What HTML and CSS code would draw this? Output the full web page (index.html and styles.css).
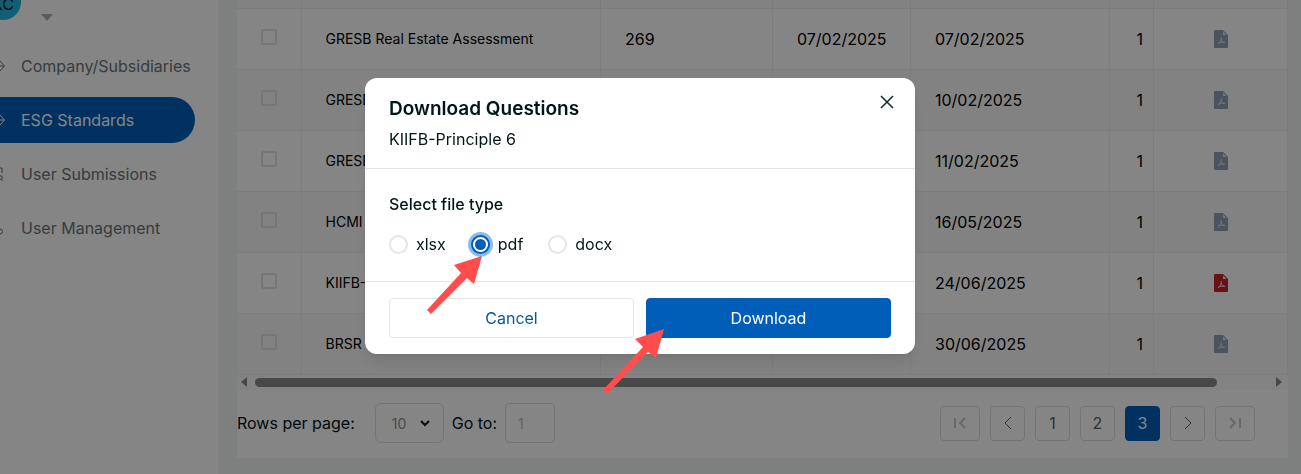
FILE: index.html
```html
<!DOCTYPE html>
<html lang="en">
<head>
<meta charset="utf-8">
<title>ESG Standards</title>
<link rel="stylesheet" href="styles.css">
</head>
<body>
<svg class="defs" aria-hidden="true">
  <symbol id="pdf" viewBox="0 0 14 18">
    <path fill="currentColor" d="M1 0h8l5 5v12a1 1 0 0 1-1 1H1a1 1 0 0 1-1-1V1a1 1 0 0 1 1-1z"/>
    <path class="fold" d="M9 1.500v3.500h3.500z"/>
    <path class="mark" d="M7 7c.6 2 .5 3-3 7M7 9c.7 2 2 3.200 4 3.500M4 13.500c2-1.400 4-1.600 7-1"/>
  </symbol>
</svg>
<div class="app">
  <aside class="sidebar">
    <div class="profile">
      <span class="avatar">KC</span>
      <span class="caret"></span>
    </div>
    <nav class="nav">
      <a href="#"><svg class="nav-icon" viewBox="0 0 21 20"><path d="M0 5l4.500 5L0 15M0 10h4"/></svg>Company/Subsidiaries</a>
      <a href="#" class="active"><svg class="nav-icon" viewBox="0 0 21 20"><path d="M0 5l4.500 5L0 15M0 10h4"/></svg>ESG Standards</a>
      <a href="#"><svg class="nav-icon" viewBox="0 0 21 20"><path d="M0 4h2v5M0 12h1a1.500 1.500 0 0 1 0 3H0M1 15l1.500 2"/></svg>User Submissions</a>
      <a href="#"><svg class="nav-icon" viewBox="0 0 21 20"><path d="M0 11a2.500 2.500 0 0 1 0 5"/></svg>User Management</a>
    </nav>
  </aside>
  <main class="main">
    <section class="card">
      <table class="grid">
        <colgroup><col class="c-check"><col><col class="c-count"><col class="c-created"><col class="c-updated"><col class="c-version"><col class="c-file"></colgroup>
        <tbody>
          <tr class="stub"><td></td><td></td><td></td><td></td><td></td><td></td><td></td></tr>
          <tr><td class="check"><input type="checkbox" aria-label="Select row"></td><td>GRESB Real Estate Assessment</td><td class="num">269</td><td class="num">07/02/2025</td><td class="num">07/02/2025</td><td class="ver">1</td><td class="file"><svg class="pdf"><use href="#pdf"/></svg></td></tr>
          <tr><td class="check"><input type="checkbox" aria-label="Select row"></td><td>GRESB</td><td></td><td></td><td class="num">10/02/2025</td><td class="ver">1</td><td class="file"><svg class="pdf"><use href="#pdf"/></svg></td></tr>
          <tr><td class="check"><input type="checkbox" aria-label="Select row"></td><td>GRESB</td><td></td><td></td><td class="num">11/02/2025</td><td class="ver">1</td><td class="file"><svg class="pdf"><use href="#pdf"/></svg></td></tr>
          <tr><td class="check"><input type="checkbox" aria-label="Select row"></td><td>HCMI</td><td></td><td></td><td class="num">16/05/2025</td><td class="ver">1</td><td class="file"><svg class="pdf"><use href="#pdf"/></svg></td></tr>
          <tr><td class="check"><input type="checkbox" aria-label="Select row"></td><td>KIIFB-Principle 6</td><td></td><td></td><td class="num">24/06/2025</td><td class="ver">1</td><td class="file"><svg class="pdf ready"><use href="#pdf"/></svg></td></tr>
          <tr><td class="check"><input type="checkbox" aria-label="Select row"></td><td>BRSR</td><td></td><td></td><td class="num">30/06/2025</td><td class="ver">1</td><td class="file"><svg class="pdf"><use href="#pdf"/></svg></td></tr>
        </tbody>
      </table>
      <div class="scrollbar">
        <svg class="tri" viewBox="0 0 6 10"><path d="M6 0v10L0 5z"/></svg>
        <div class="track"><div class="thumb"></div></div>
        <svg class="tri" viewBox="0 0 6 10"><path d="M0 0v10l6-5z"/></svg>
      </div>
      <footer class="pager">
        <label for="rows">Rows per page:</label>
        <span class="select-wrap">
          <select id="rows"><option>10</option></select>
          <svg class="chev" viewBox="0 0 12 8"><path d="M2 2l4 4 4-4"/></svg>
        </span>
        <label for="goto">Go to:</label>
        <input id="goto" class="goto" type="text" placeholder="1">
        <div class="pages">
          <button class="edge" aria-label="First page"><svg viewBox="0 0 14 14"><path d="M2 2v10M12 2L7 7l5 5"/></svg></button>
          <button aria-label="Previous page"><svg viewBox="0 0 14 14"><path d="M10 1L4 7l6 6"/></svg></button>
          <button>1</button>
          <button>2</button>
          <button class="current">3</button>
          <button aria-label="Next page"><svg viewBox="0 0 14 14"><path d="M4 1l6 6-6 6"/></svg></button>
          <button class="edge" aria-label="Last page"><svg viewBox="0 0 14 14"><path d="M12 2v10M2 2l5 5-5 5"/></svg></button>
        </div>
      </footer>
    </section>
  </main>
</div>
<div class="overlay">
  <form class="modal" role="dialog" aria-labelledby="title">
    <header class="modal-head">
      <div>
        <h2 id="title">Download Questions</h2>
        <p>KIIFB-Principle 6</p>
      </div>
      <button type="button" class="close" aria-label="Close"><svg viewBox="0 0 14 14"><path d="M1 1l12 12M13 1L1 13"/></svg></button>
    </header>
    <fieldset class="modal-body">
      <legend>Select file type</legend>
      <div class="options">
        <label><input type="radio" name="type">xlsx</label>
        <label><input type="radio" name="type" checked>pdf</label>
        <label><input type="radio" name="type">docx</label>
      </div>
    </fieldset>
    <footer class="modal-foot">
      <button type="button" class="cancel">Cancel</button>
      <button type="button" class="download">Download</button>
    </footer>
    <svg class="pointer to-radio" viewBox="0 0 62 68"><path d="M57 2L29 11l7 8L2 56l4 4 36-36 7 6z"/></svg>
    <svg class="pointer to-download" viewBox="0 0 62 68"><path d="M61 1L32 11l8 8L0 62l4 4 41-42 8 6z"/></svg>
  </form>
</div>
</body>
</html>
```
FILE: styles.css
```css
* { box-sizing: border-box; }
body {
  margin: 0;
  overflow: hidden;
  background: #f2f6f6;
  color: #021517;
  font-family: Inter, "Liberation Sans", sans-serif;
  font-size: 16px;
}
button, input, select { font: inherit; }
.defs { position: absolute; width: 0; height: 0; }
.app { display: flex; min-height: 100vh; }

.sidebar { flex: 0 0 218px; background: #fff; }
.profile { display: flex; align-items: flex-start; height: 43px; }
.avatar {
  width: 36px;
  height: 36px;
  margin: -16px 20px 0 -15px;
  border-radius: 50%;
  background: #1fb6dc;
  line-height: 40px;
  text-align: center;
}
.caret {
  margin-top: 14px;
  border: 6px solid transparent;
  border-top: 7px solid #a7afc8;
  border-bottom: 0;
}
.nav { display: flex; flex-direction: column; gap: 8px; padding-right: 23px; }
.nav a {
  display: flex;
  align-items: center;
  height: 46px;
  border-radius: 0 23px 23px 0;
  color: #6b7478;
  text-decoration: none;
  white-space: nowrap;
}
.nav .active { background: #005eb8; color: #fff; }
.nav-icon { flex: none; width: 21px; height: 20px; fill: none; stroke: currentColor; }

.main { flex: 1; min-width: 0; padding: 0 13px 16px 19px; }
.card { height: 100%; background: #fff; }
.grid { width: 100%; table-layout: fixed; border-collapse: collapse; color: #000; font-size: 14px; }
.grid td { height: 61px; padding: 0 0 0 24px; border: 1px solid #ededee; white-space: nowrap; }
.grid td:first-child { border-left: 0; }
.grid tr:nth-child(odd) { background: #fafafb; }
.grid .stub td { height: 8px; border-top: 0; }
.grid .num, .grid .ver { font-size: 16px; }
.grid .ver { padding: 0 10px 0 0; text-align: right; }
.grid .check { padding: 0; text-align: center; }
.grid .file { padding: 0; text-align: center; }
.c-check { width: 64px; }
.c-count { width: 172px; }
.c-created { width: 138px; }
.c-updated { width: 199px; }
.c-version { width: 44px; }
.c-file { width: 134px; }
.check input {
  appearance: none;
  display: block;
  width: 16px;
  height: 16px;
  margin: 0 auto 4px;
  border: 2px solid #dfe3ea;
  border-radius: 2px;
}
.pdf { display: block; width: 14px; height: 18px; margin: 0 auto; color: #8f9fb5; }
.pdf.ready { color: #cb2128; }
.fold { fill: #e3e6ea; }
.mark { fill: none; stroke: #e3e6ea; }

.scrollbar { display: flex; align-items: center; justify-content: space-between; height: 15px; padding: 0 6px 0 4px; background: #fcfcfc; }
.tri { width: 6px; height: 10px; fill: #888; }
.track { flex: 1; margin: 0 8px; }
.thumb { width: 95%; height: 9px; border-radius: 5px; background: #8b8b8b; }
.pager { display: flex; align-items: center; height: 67px; }
.select-wrap { position: relative; margin: 0 8px 0 20px; }
.pager select {
  appearance: none;
  display: block;
  width: 69px;
  height: 40px;
  padding: 0 16px;
  border: 1px solid #d9dee0;
  border-radius: 6px;
  background: #fff;
  color: #8b9294;
  font-size: 14px;
}
.chev { position: absolute; right: 13px; top: 16px; width: 12px; height: 8px; fill: none; stroke: #111; stroke-width: 2; }
.goto {
  width: 50px;
  height: 40px;
  margin-left: 8px;
  padding: 0 12px;
  border: 1px solid #d9dee0;
  border-radius: 4px;
  background: #fff;
  font-size: 14px;
}
.goto::placeholder { color: #b9bec0; }
.pages { display: flex; gap: 10px; margin: 0 33px 0 auto; }
.pages button {
  display: grid;
  place-items: center;
  width: 35px;
  height: 35px;
  padding: 0;
  border: 1px solid #d9dee0;
  border-radius: 4px;
  background: #fff;
  color: #5b6163;
}
.pages .edge { width: 40px; color: #c3c8ca; }
.pages .current { border-color: #005eb8; background: #005eb8; color: #fff; }
.pages svg { width: 14px; height: 14px; fill: none; stroke: currentColor; stroke-width: 1; }
.pages .edge svg { stroke-width: 2; }

.overlay {
  position: fixed;
  inset: 0;
  display: flex;
  align-items: flex-start;
  justify-content: center;
  padding: 78px 21px 0 0;
  background: rgba(0, 0, 0, .48);
}
.modal {
  position: relative;
  width: 550px;
  border-radius: 12px;
  background: #fff;
  box-shadow: 0 10px 15px -3px rgba(0, 0, 0, .1), 0 4px 6px -2px rgba(0, 0, 0, .05);
}
.modal-head {
  display: flex;
  justify-content: space-between;
  align-items: flex-start;
  padding: 16px 20px 14px 24px;
  border-bottom: 1px solid #e1e6e7;
}
.modal h2, .modal p { margin: 0; line-height: 30px; font-weight: 400; }
.modal h2 { font-size: 19px; font-weight: 600; }
.close { padding: 0; border: 0; background: none; }
.close svg { display: block; width: 14px; height: 14px; margin: 1px; fill: none; stroke: #10262a; stroke-width: 1.500; }
.modal-body { margin: 0; padding: 20px 24px 22px; border: 0; line-height: 30px; }
.modal-body legend { float: left; width: 100%; margin-bottom: 10px; padding: 0; font-weight: 500; }
.options { display: flex; gap: 25px; clear: both; }
.options label { display: flex; align-items: center; gap: 8px; }
.options input {
  appearance: none;
  width: 19px;
  height: 19px;
  margin: 0;
  border: 2px solid #e3e7e9;
  border-radius: 50%;
}
.options input:checked {
  border-color: #005eb8;
  background: #005eb8;
  background-clip: content-box;
  padding: 2px;
  box-shadow: 0 0 0 3px #8bbcec;
}
.modal-foot { display: flex; gap: 12px; padding: 16px 24px; border-top: 1px solid #e1e6e7; }
.modal-foot button { flex: 1; height: 40px; border: 1px solid #e1e6e7; border-radius: 4px; background: #fff; color: #005a9c; }
.modal-foot .download { border-color: #005eb8; background: #005eb8; color: #fff; }
.pointer { position: absolute; width: 62px; height: 68px; fill: #ff4d4d; pointer-events: none; }
.to-radio { left: 60px; top: 176px; }
.to-download { left: 238px; top: 250px; }
```
